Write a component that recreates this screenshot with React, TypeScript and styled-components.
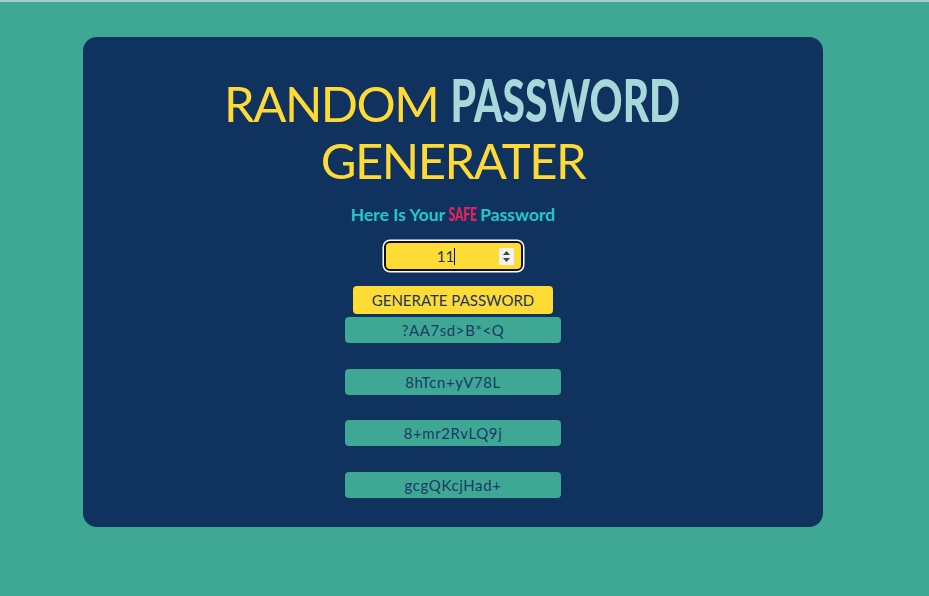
import React from 'react';
import styled, { createGlobalStyle } from 'styled-components';

const GlobalStyle = createGlobalStyle`
  html, body {
    margin: 0;
    padding: 0;
    background: #3ea895;
    font-family: Lato, 'Open Sans', sans-serif;
  }
`;

const TopLine = styled.div`
  height: 2px;
  background: #a9c9cd;
`;

const Page = styled.div`
  padding: 35px 0 0 83px;
`;

const Card = styled.div`
  width: 740px;
  height: 490px;
  box-sizing: border-box;
  background: #0f325e;
  border-radius: 14px;
  padding-top: 38px;
  display: flex;
  flex-direction: column;
  align-items: center;
`;

const Title = styled.h1`
  margin: 0;
  font-size: 49px;
  line-height: 57px;
  font-weight: 400;
  letter-spacing: -1.5px;
  color: #ffd935;
  text-align: center;
`;

// narrow heavy face, squeezed from Lato
const Condensed = styled.span<{ $scale: number; $pull: number }>`
  display: inline-block;
  font-weight: 900;
  letter-spacing: 0;
  transform: scaleX(${({ $scale }) => $scale});
  transform-origin: center;
  margin: 0 -${({ $pull }) => $pull}px;
`;

const Accent = styled(Condensed)`
  font-size: 59px;
  line-height: 40px;
  color: #a7d8da;
`;

const Subtitle = styled.p`
  margin: 15px 0 0;
  font-size: 17.5px;
  font-weight: 700;
  color: #24c8c6;
`;

const Safe = styled(Condensed)`
  font-size: 18px;
  line-height: 1;
  color: #e3225a;
`;

const LengthField = styled.div`
  margin-top: 16px;
  width: 139px;
  height: 30px;
  box-sizing: border-box;
  border: 2px solid #111;
  border-radius: 6px;
  box-shadow: 0 0 0 1.5px #fff;
  background: #ffdb36;
  display: flex;
  align-items: center;
`;

const FieldValue = styled.div`
  flex: 1;
  text-align: center;
  font-size: 15px;
  color: #1c3560;
  padding-left: 8px;
`;

const Caret = styled.span`
  display: inline-block;
  width: 1px;
  height: 17px;
  background: #111;
  vertical-align: -3px;
`;

const Spinner = styled.div`
  width: 15px;
  height: 17px;
  margin-right: 7px;
  background: #f1f1f1;
  display: flex;
  align-items: center;
  justify-content: center;
`;

const GenerateButton = styled.button`
  margin-top: 15px;
  width: 200px;
  height: 28px;
  border: none;
  border-radius: 4px;
  background: #ffdb36;
  color: #1c3560;
  font-family: Lato, sans-serif;
  font-size: 15px;
  padding: 0;
`;

const PasswordList = styled.div`
  margin-top: 3px;
  display: flex;
  flex-direction: column;
  gap: 25.5px;
`;

const PasswordBox = styled.div`
  width: 216px;
  height: 26px;
  border-radius: 4px;
  background: #3ea895;
  color: #1c3a66;
  font-size: 15px;
  letter-spacing: 0.6px;
  display: flex;
  align-items: center;
  justify-content: center;
`;

const passwords = ['?AA7sd>B*<Q', '8hTcn+yV78L', '8+mr2RvLQ9j', 'gcgQKcjHad+'];

export default function App() {
  return (
    <>
      <GlobalStyle />
      <TopLine />
      <Page>
        <Card>
          <Title>
            RANDOM{' '}
            <Accent $scale={0.69} $pull={50}>
              PASSWORD
            </Accent>
            <br />
            GENERATER
          </Title>
          <Subtitle>
            Here Is Your{' '}
            <Safe $scale={0.66} $pull={8}>
              SAFE
            </Safe>{' '}
            Password
          </Subtitle>
          <LengthField>
            <FieldValue>
              11<Caret />
            </FieldValue>
            <Spinner>
              <svg width="9" height="13" viewBox="0 0 9 13">
                <path d="M4.5 1 L8 5 L1 5 Z" fill="#444" />
                <path d="M4.5 12 L8 8 L1 8 Z" fill="#444" />
              </svg>
            </Spinner>
          </LengthField>
          <GenerateButton>GENERATE PASSWORD</GenerateButton>
          <PasswordList>
            {passwords.map((p) => (
              <PasswordBox key={p}>{p}</PasswordBox>
            ))}
          </PasswordList>
        </Card>
      </Page>
    </>
  );
}
